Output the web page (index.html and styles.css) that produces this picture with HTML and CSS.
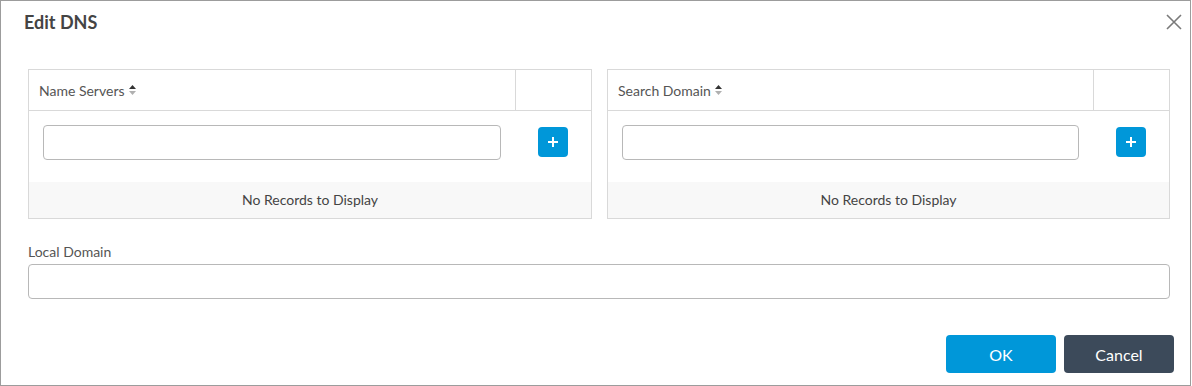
FILE: index.html
```html
<!DOCTYPE html>
<html>
<head>
<meta charset="utf-8">
<link rel="stylesheet" href="styles.css">
</head>
<body>
<div class="dialog">
  <div class="header">
    <h1 class="title">Edit DNS</h1>
    <button class="close" aria-label="Close">
      <svg width="16" height="16" viewBox="0 0 16 16"><path d="M1 1L15 15M15 1L1 15" stroke="#7a7a7a" stroke-width="1.6" fill="none"/></svg>
    </button>
  </div>
  <div class="body">
    <div class="panels">
      <div class="panel">
        <div class="row head">
          <div class="cell main">Name Servers
            <svg class="sort" width="7" height="10" viewBox="0 0 7 10"><path d="M0 4L3.5 0L7 4Z" fill="#333"/><path d="M0 6L3.5 10L7 6Z" fill="#b0b0b0"/></svg>
          </div>
          <div class="cell side"></div>
        </div>
        <div class="row entry">
          <div class="cell main"><input class="input" type="text"></div>
          <div class="cell side">
            <button class="add"><svg width="10" height="10" viewBox="0 0 10 10"><path d="M5 0V10M0 5H10" stroke="#fff" stroke-width="2"/></svg></button>
          </div>
        </div>
        <div class="empty">No Records to Display</div>
      </div>
      <div class="panel">
        <div class="row head">
          <div class="cell main">Search Domain
            <svg class="sort" width="7" height="10" viewBox="0 0 7 10"><path d="M0 4L3.5 0L7 4Z" fill="#333"/><path d="M0 6L3.5 10L7 6Z" fill="#b0b0b0"/></svg>
          </div>
          <div class="cell side"></div>
        </div>
        <div class="row entry">
          <div class="cell main"><input class="input" type="text"></div>
          <div class="cell side">
            <button class="add"><svg width="10" height="10" viewBox="0 0 10 10"><path d="M5 0V10M0 5H10" stroke="#fff" stroke-width="2"/></svg></button>
          </div>
        </div>
        <div class="empty">No Records to Display</div>
      </div>
    </div>
    <label class="label">Local Domain</label>
    <input class="input wide" type="text">
  </div>
  <div class="footer">
    <button class="btn ok">OK</button>
    <button class="btn cancel">Cancel</button>
  </div>
</div>
</body>
</html>
```

FILE: styles.css
```css
* { box-sizing: border-box; }
html, body { margin: 0; padding: 0; background: #fff; }
body { font-family: Lato, "Open Sans", sans-serif; color: #555; }
.dialog {
  width: 1191px;
  height: 386px;
  border: 1px solid #9c9c9c;
  display: flex;
  flex-direction: column;
}
.header {
  display: flex;
  justify-content: space-between;
  align-items: flex-start;
  padding: 10px 8px 0 23px;
}
.title {
  margin: 0;
  font-size: 18px;
  line-height: 22px;
  font-weight: 700;
  color: #444;
}
.close {
  border: 0;
  background: none;
  padding: 0;
  margin-top: 3px;
  width: 16px;
  height: 16px;
  display: block;
}
.close svg { display: block; }
.body {
  padding: 36px 20px 0 27px;
  display: flex;
  flex-direction: column;
}
.panels {
  display: grid;
  grid-template-columns: 564px 563px;
  column-gap: 15px;
}
.panel {
  border: 1px solid #d9d9d9;
  display: flex;
  flex-direction: column;
}
.row { display: flex; }
.head {
  height: 41px;
  border-bottom: 1px solid #d9d9d9;
}
.cell.main { flex: 1; }
.cell.side { width: 75px; flex: none; }
.head .cell.main {
  border-right: 1px solid #d9d9d9;
  display: flex;
  align-items: center;
  padding: 1px 0 0 10px;
  font-size: 14px;
  color: #555;
}
.sort { margin-left: 4px; margin-top: -2px; display: block; }
.entry { height: 71px; }
.entry .cell.main { padding: 14px 15px 0 14px; }
.entry .cell.side {
  display: flex;
  justify-content: center;
  padding-top: 16px;
}
.input {
  display: block;
  width: 100%;
  height: 35px;
  border: 1px solid #b8b8b8;
  border-radius: 4px;
  background: #fff;
  font-family: inherit;
  font-size: 14px;
  padding: 0 8px;
  outline: none;
}
.add {
  width: 30px;
  height: 30px;
  border: 0;
  border-radius: 4px;
  background: #0097d9;
  padding: 0;
  margin-left: -1px;
  display: flex;
  align-items: center;
  justify-content: center;
}
.add svg { display: block; }
.empty {
  height: 36px;
  padding-bottom: 2px;
  background: #f8f8f8;
  display: flex;
  align-items: center;
  justify-content: center;
  font-size: 14px;
  color: #444;
}
.label {
  margin-top: 24px;
  font-size: 14px;
  line-height: 17px;
  color: #555;
}
.wide { margin-top: 4px; }
.footer {
  margin-top: auto;
  display: flex;
  justify-content: flex-end;
  gap: 8px;
  padding: 0 16px 12px 0;
}
.btn {
  width: 110px;
  height: 38px;
  border: 0;
  border-radius: 4px;
  color: #fff;
  font-family: inherit;
  font-size: 16px;
  padding: 0;
}
.ok { background: #0097d9; }
.cancel { background: #3c4a5a; }
```
